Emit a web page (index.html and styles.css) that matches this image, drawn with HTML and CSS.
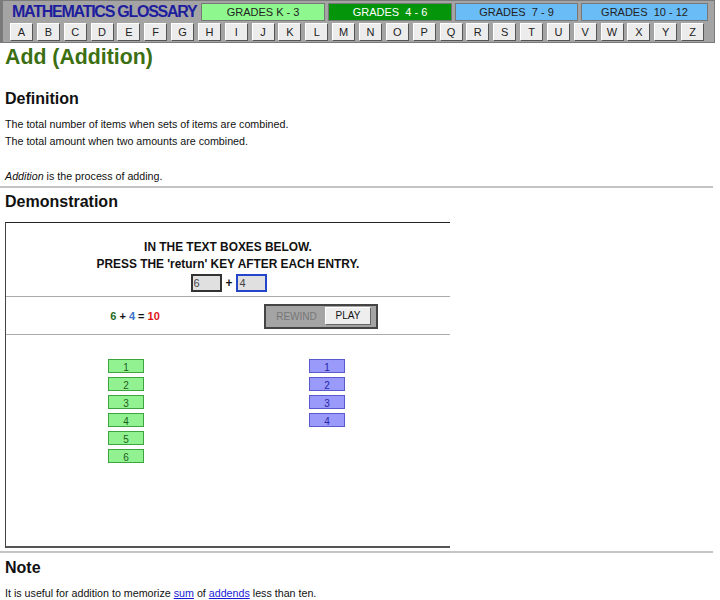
FILE: index.html
```html
<!DOCTYPE html>
<html lang="en">

<head>
  <meta charset="UTF-8">
  <title>Add (Addition) - Mathematics Glossary</title>
  <link rel="stylesheet" href="styles.css">
</head>

<body>
  <div class="glossary-header">
    <div class="header-top">
      <div class="header-title">MATHEMATICS GLOSSARY</div>
      <div class="grade-tab grade-k3">GRADES K - 3</div>
      <div class="grade-tab grade-46">GRADES &nbsp;4 - 6</div>
      <div class="grade-tab grade-79">GRADES &nbsp;7 - 9</div>
      <div class="grade-tab grade-1012">GRADES &nbsp;10 - 12</div>
    </div>
    <div class="letter-row">
      <span class="letter">A</span><span class="letter">B</span><span class="letter">C</span><span class="letter">D</span>
      <span class="letter">E</span><span class="letter">F</span><span class="letter">G</span><span class="letter">H</span>
      <span class="letter">I</span><span class="letter">J</span><span class="letter">K</span><span class="letter">L</span>
      <span class="letter">M</span><span class="letter">N</span><span class="letter">O</span><span class="letter">P</span>
      <span class="letter">Q</span><span class="letter">R</span><span class="letter">S</span><span class="letter">T</span>
      <span class="letter">U</span><span class="letter">V</span><span class="letter">W</span><span class="letter">X</span>
      <span class="letter">Y</span><span class="letter">Z</span>
    </div>
  </div>

  <h1 class="term">Add (Addition)</h1>

  <h2 class="section-title section-definition">Definition</h2>
  <p class="text">The total number of items when sets of items are combined.</p>
  <p class="text">The total amount when two amounts are combined.</p>
  <p class="text text-gap"><i>Addition</i> is the process of adding.</p>

  <hr class="divider">

  <h2 class="section-title">Demonstration</h2>
  <div class="demo">
    <div class="demo-inputs">
      <div>IN THE TEXT BOXES BELOW.</div>
      <div>PRESS THE 'return' KEY AFTER EACH ENTRY.</div>
      <div class="input-row">
        <input class="num-box num-first" type="text" value="6">
        <span class="plus">+</span>
        <input class="num-box num-second" type="text" value="4">
      </div>
    </div>
    <div class="demo-controls">
      <div class="sum-line">
        <span class="n-green">6</span> + <span class="n-blue">4</span> = <span class="n-red">10</span>
      </div>
      <div class="player">
        <span class="rewind">REWIND</span>
        <span class="play">PLAY</span>
      </div>
    </div>
    <div class="demo-stage">
      <div class="stack">
        <div class="block block-green">1</div>
        <div class="block block-green">2</div>
        <div class="block block-green">3</div>
        <div class="block block-green">4</div>
        <div class="block block-green">5</div>
        <div class="block block-green">6</div>
      </div>
      <div class="stack">
        <div class="block block-blue">1</div>
        <div class="block block-blue">2</div>
        <div class="block block-blue">3</div>
        <div class="block block-blue">4</div>
      </div>
    </div>
  </div>

  <hr class="divider divider-note">

  <h2 class="section-title section-note">Note</h2>
  <p class="text">It is useful for addition to memorize <a href="#">sum</a> of <a href="#">addends</a> less than ten.</p>
</body>

</html>
```

FILE: styles.css
```css
body {
  margin: 0;
  padding: 0 5px;
  font-family: "Liberation Sans", Arial, sans-serif;
  color: #111;
  background: #fff;
}

.glossary-header {
  margin-left: -5px;
  width: 711px;
  height: 39px;
  padding: 2px 0 0 0;
  background-color: #a4a4a4;
  border: 1px solid #7a7a7a;
  border-left-width: 3px;
}

.header-top {
  display: flex;
  align-items: center;
  height: 17px;
}

.header-title {
  width: 189px;
  padding-left: 9px;
  font-size: 16px;
  font-weight: bold;
  letter-spacing: -1.25px;
  color: #1d1d9e;
  white-space: nowrap;
}

.grade-tab {
  height: 16px;
  line-height: 16px;
  margin-right: 3px;
  font-size: 11px;
  text-align: center;
  border: 1px solid #777;
}

.grade-k3 {
  width: 122px;
  background-color: #8ef88e;
  color: #222;
}

.grade-46 {
  width: 122px;
  background-color: #04950a;
  color: #fff;
}

.grade-79 {
  width: 121px;
  background-color: #6abcf6;
  color: #222;
}

.grade-1012 {
  width: 125px;
  margin-right: 0;
  background-color: #6abcf6;
  color: #222;
}

.letter-row {
  display: grid;
  grid-template-columns: repeat(26, 23px);
  column-gap: 3.85px;
  margin-top: 3px;
  padding-left: 7px;
}

.letter {
  height: 16px;
  line-height: 16px;
  font-size: 11px;
  text-align: center;
  color: #222;
  background-color: #ececec;
  border: 1px solid #fff;
  border-right-color: #555;
  border-bottom-color: #555;
}

.term {
  margin: 0;
  font-size: 21.3px;
  line-height: 28px;
  color: #3c6f12;
}

.section-title {
  margin: 0;
  font-size: 16px;
  line-height: 20px;
  color: #111;
}

.section-definition {
  margin-top: 18px;
}

.text {
  margin: 0;
  font-size: 10.7px;
  line-height: 17px;
}

.section-definition + .text {
  margin-top: 7px;
}

.text-gap {
  margin-top: 18px;
}

.divider {
  margin: 1px 0 4px -5px;
  width: 713px;
  height: 0;
  border: 0;
  border-top: 2px solid #c4c4c4;
}

.demo {
  width: 444px;
  height: 323px;
  margin-top: 10px;
  border-top: 1px solid #222;
  border-left: 1px solid #444;
  border-bottom: 2px solid #555;
}

.demo-inputs {
  height: 74px;
  padding-top: 16px;
  box-sizing: border-box;
  font-size: 11.9px;
  font-weight: bold;
  line-height: 17px;
  text-align: center;
  border-bottom: 1px solid #aaa;
}

.input-row {
  display: flex;
  justify-content: center;
  align-items: center;
  gap: 4px;
  margin-top: 1px;
  padding-left: 2px;
}

.num-box {
  width: 26px;
  height: 14px;
  padding: 0 0 0 1px;
  font-family: "Liberation Sans", Arial, sans-serif;
  font-size: 11px;
  color: #444;
  background-color: #e0e0e0;
  border: 2px solid #333;
  outline: none;
}

.num-second {
  border-color: #2446c8;
}

.demo-controls {
  display: flex;
  align-items: center;
  height: 37px;
  border-bottom: 1px solid #aaa;
}

.sum-line {
  width: 258px;
  font-size: 11px;
  font-weight: bold;
  text-align: center;
}

.n-green {
  color: #1f6b1f;
}

.n-blue {
  color: #3a72c8;
}

.n-red {
  color: #e01414;
}

.player {
  display: flex;
  align-items: center;
  width: 110px;
  height: 21px;
  margin-top: 1px;
  background-color: #a4a4a4;
  border: 2px solid #444;
}

.rewind {
  width: 57px;
  padding-left: 2px;
  font-size: 10px;
  text-align: center;
  color: #777;
}

.play {
  width: 44px;
  height: 16px;
  line-height: 16px;
  font-size: 10px;
  text-align: center;
  color: #111;
  background-color: #eee;
  border: 1px solid #fff;
  border-right-color: #666;
  border-bottom-color: #666;
}

.demo-stage {
  display: flex;
  padding: 24px 0 0 102px;
  gap: 165px;
}

.stack {
  display: flex;
  flex-direction: column;
  gap: 4px;
}

.block {
  width: 34px;
  height: 12px;
  line-height: 15px;
  font-size: 10px;
  text-align: center;
  overflow: hidden;
}

.block-green {
  color: #1b5e1b;
  background-color: #92f292;
  border: 1px solid #3da53d;
}

.block-blue {
  color: #2626a8;
  background-color: #9a9afa;
  border: 1px solid #5a5acc;
}

.divider-note {
  margin-top: 3px;
  margin-bottom: 5px;
}

.section-note {
  line-height: 20px;
}

.section-note + .text {
  margin-top: 7px;
}

a {
  color: #1a1ad6;
  text-decoration: underline;
}
```
